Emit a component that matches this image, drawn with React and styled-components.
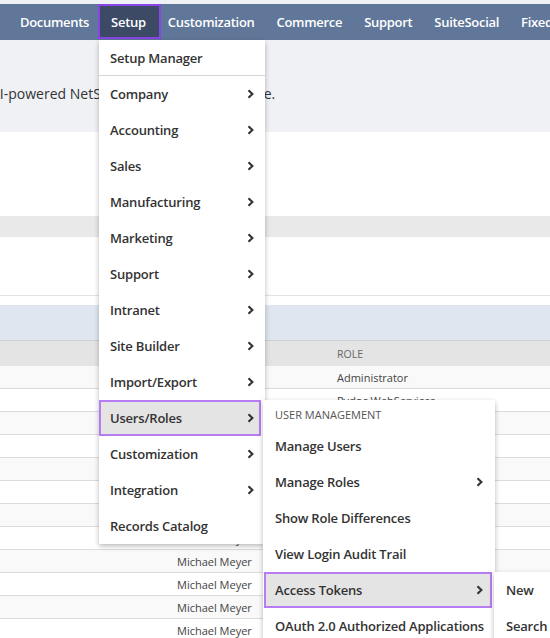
import React from 'react';
import styled, { createGlobalStyle, css } from 'styled-components';

const Global = createGlobalStyle`
  html, body { margin: 0; padding: 0; background: #eff1f5; overflow: hidden; }
  body { font-family: "Open Sans", "Noto Sans", sans-serif; }
`;

const Page = styled.div`
  position: relative;
  width: 550px;
  height: 638px;
  overflow: hidden;
  background: #eff1f5;
`;

const NavBar = styled.nav`
  margin-top: 4px;
  height: 36px;
  background: #607799;
  display: flex;
  align-items: stretch;
  padding-left: 9px;
  white-space: nowrap;
`;

const NavItem = styled.div`
  display: flex;
  align-items: center;
  flex-shrink: 0;
  padding: 0 11px;
  color: #fff;
  font-size: 13px;
  font-weight: 600;
  letter-spacing: -0.3px;
  ${(p) =>
    p.$active &&
    css`
      background: #3c4a65;
      box-shadow: inset 0 0 0 2px #8a45e6;
      padding: 0 15px 0 13px;
      margin: 0 -4px 0 -2px;
      height: 35px;
    `}
`;

const Hero = styled.section`
  height: 92px;
  box-sizing: border-box;
  padding-top: 44px;
  background: #eff1f5;
  overflow: hidden;
`;

const HeroText = styled.p`
  margin: 0 0 0 -9px;
  font-size: 14px;
  line-height: 20px;
  color: #333;
  white-space: nowrap;
`;

const WhitePanel = styled.div`
  height: ${(p) => p.$h}px;
  box-sizing: border-box;
  background: #fff;
  border-bottom: ${(p) => (p.$line ? '1px solid #e3e3e3' : 'none')};
`;

const GreyBand = styled.div`
  height: 21px;
  background: #e9e9e9;
`;

const BlueBand = styled.div`
  height: 35px;
  background: #dfe6f0;
`;

const TableHead = styled.div`
  display: grid;
  grid-template-columns: 177px 160px 1fr;
  align-items: center;
  height: 26px;
  box-sizing: border-box;
  border-top: 1px solid #cfcfcf;
  background: #e4e4e4;
  font-size: 10.5px;
  color: #666;
  text-transform: uppercase;
`;

const Row = styled.div`
  display: grid;
  grid-template-columns: 177px 160px 1fr;
  align-items: center;
  height: 23px;
  box-sizing: border-box;
  border-bottom: 1px solid #dcdcdc;
  background: ${(p) => (p.$alt ? '#f9f9f9' : '#fff')};
  font-size: 11px;
  color: #444;
  white-space: nowrap;
`;

const Menu = styled.div`
  position: absolute;
  left: ${(p) => p.$left}px;
  top: ${(p) => p.$top}px;
  width: ${(p) => p.$w}px;
  background: #fff;
  box-shadow: 0 2px 5px rgba(0, 0, 0, 0.28);
  z-index: ${(p) => p.$z};
`;

const MenuItem = styled.div`
  display: flex;
  align-items: center;
  justify-content: space-between;
  height: 36px;
  box-sizing: border-box;
  padding: 0 ${(p) => p.$pad}px;
  font-size: 13px;
  font-weight: 600;
  letter-spacing: -0.2px;
  color: #333;
  white-space: nowrap;
  ${(p) =>
    p.$sep &&
    css`
      border-bottom: 1px solid #d6d6d6;
    `}
  ${(p) =>
    p.$active &&
    css`
      background: #e4e4e4;
      box-shadow: inset 0 0 0 2px #b67cf2;
      margin: 0 ${p.$mr}px 0 ${p.$ml}px;
      padding: 0 ${p.$pad - p.$mr}px 0 ${p.$pad - p.$ml}px;
    `}
`;

const MenuHeader = styled.div`
  display: flex;
  align-items: center;
  height: 28px;
  padding: 0 12px;
  font-size: 11px;
  color: #555;
  text-transform: uppercase;
`;

const Chevron = () => (
  <svg width="7" height="10" viewBox="0 0 7 10" aria-hidden="true">
    <polyline points="1.5,1.2 5.4,5 1.5,8.8" fill="none" stroke="#333" strokeWidth="2.1" />
  </svg>
);

const navItems = ['Documents', 'Setup', 'Customization', 'Commerce', 'Support', 'SuiteSocial', 'Fixed Assets'];

const setupItems = [
  'Company', 'Accounting', 'Sales', 'Manufacturing', 'Marketing', 'Support', 'Intranet',
  'Site Builder', 'Import/Export', 'Users/Roles', 'Customization', 'Integration', 'Records Catalog',
];

const userItems = [
  { label: 'Manage Users' },
  { label: 'Manage Roles', sub: true },
  { label: 'Show Role Differences' },
  { label: 'View Login Audit Trail' },
  { label: 'Access Tokens', sub: true, active: true },
  { label: 'OAuth 2.0 Authorized Applications' },
];

const rows = [
  { name: 'Michael Meyer', role: 'Administrator' },
  { name: 'Michael Meyer', role: 'Pydoc WebServices' },
  { name: 'Michael Meyer', role: 'Administrator' },
  { name: 'Michael Meyer', role: 'Administrator' },
  { name: 'Michael Meyer', role: 'Administrator' },
  { name: 'Michael Meyer', role: 'Administrator' },
  { name: 'Michael Meyer', role: 'Administrator' },
  { name: 'Michael Meyer', role: 'Administrator' },
  { name: 'Michael Meyer', role: 'Administrator' },
  { name: 'Michael Meyer', role: 'Administrator' },
  { name: 'Michael Meyer', role: 'Administrator' },
  { name: 'Michael Meyer', role: 'Administrator' },
];

export default function App() {
  return (
    <Page>
      <Global />
      <NavBar>
        {navItems.map((n) => (
          <NavItem key={n} $active={n === 'Setup'}>{n}</NavItem>
        ))}
      </NavBar>
      <Hero>
        <HeroText>AI-powered NetSuite. Here is your new one.</HeroText>
      </Hero>
      <WhitePanel $h={84} />
      <GreyBand />
      <WhitePanel $h={59} $line />
      <WhitePanel $h={9} />
      <BlueBand />
      <TableHead>
        <span />
        <span />
        <span>Role</span>
      </TableHead>
      {rows.map((r, i) => (
        <Row key={i} $alt={i % 2 === 0}>
          <span />
          <span>{r.name}</span>
          <span>{r.role}</span>
        </Row>
      ))}

      <Menu $left={99} $top={40} $w={166} $z={10}>
        <MenuItem $pad={11} $sep>Setup Manager</MenuItem>
        {setupItems.map((s) => (
          <MenuItem key={s} $pad={11} $active={s === 'Users/Roles'} $ml={0} $mr={4}>
            <span>{s}</span>
            {s !== 'Records Catalog' && <Chevron />}
          </MenuItem>
        ))}
      </Menu>

      <Menu $left={263} $top={400} $w={232} $z={11}>
        <MenuHeader>User Management</MenuHeader>
        {userItems.map((u) => (
          <MenuItem key={u.label} $pad={12} $active={u.active} $ml={1} $mr={3}>
            <span>{u.label}</span>
            {u.sub && <Chevron />}
          </MenuItem>
        ))}
      </Menu>

      <Menu $left={494} $top={572} $w={120} $z={12}>
        <MenuItem $pad={12}>New</MenuItem>
        <MenuItem $pad={12}>Search</MenuItem>
      </Menu>
    </Page>
  );
}
